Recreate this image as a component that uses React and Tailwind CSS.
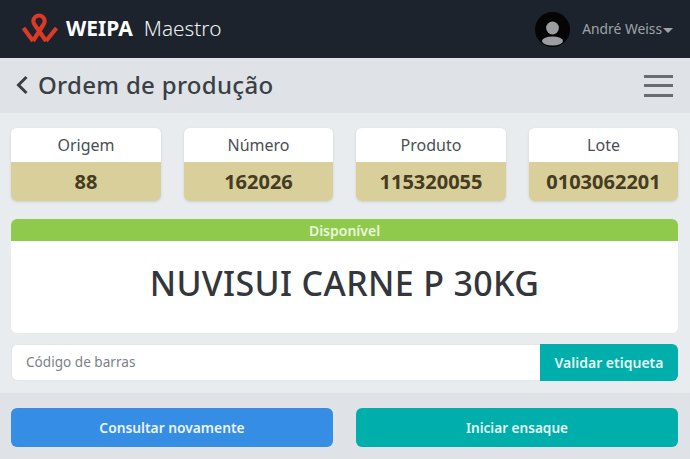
import React from "react";

const Logo = () => (
  <svg width="36" height="32" viewBox="0 0 36 32" fill="none" stroke="#dc3a26" strokeWidth="4.2" strokeLinejoin="round">
    <path d="M11 28L21.5 11.5A5.6 5.6 0 1 0 12.5 11.5L24 28" />
    <path d="M1.5 15L11 28M34.5 15L24 28" />
  </svg>
);

const InfoCard = ({ label, value, width }) => (
  <div className={`${width} rounded-md overflow-hidden shadow-sm`}>
    <div className="h-[34px] bg-white flex items-center justify-center text-[16px] text-[#4a4f55]">{label}</div>
    <div className="h-[39px] bg-[#d8cf9a] flex items-center justify-center text-[20px] font-bold text-[#453c22]">{value}</div>
  </div>
);

const App = () => {
  return (
    <div className="w-[690px] h-[459px] overflow-hidden flex flex-col bg-[#e9ecef] font-['Noto_Sans','Open_Sans',sans-serif]">
      {/* Header */}
      <div className="h-[58px] bg-[#1c232d] flex items-center justify-between pl-[22px] pr-[17px]">
        <div className="flex items-center">
          <Logo />
          <span className="ml-[8px] text-[21px] font-bold text-white">WEIPA</span>
          <span className="ml-[11px] text-[20.8px] font-light text-[#eef0f2]">Maestro</span>
        </div>
        <div className="flex items-center">
          <svg width="35" height="35" viewBox="0 0 35 35">
            <circle cx="17.5" cy="17.5" r="17.5" fill="#050505" />
            <circle cx="17.5" cy="16" r="6.4" fill="#9b9da0" />
            <ellipse cx="17.5" cy="29" rx="10.5" ry="4.5" fill="#9b9da0" />
          </svg>
          <span className="ml-[12px] text-[13.8px] text-[#9ea3a8]">André Weiss</span>
          <span className="ml-[1px] mt-[2px] w-0 h-0 border-x-[5px] border-x-transparent border-t-[5px] border-t-[#9ea3a8]" />
        </div>
      </div>

      {/* Title bar */}
      <div className="h-[55px] bg-[#dfe3e8] flex items-center justify-between pl-[16px] pr-[17px]">
        <div className="flex items-center pb-[2px]">
          <svg width="12" height="20" viewBox="0 0 12 20" fill="none" stroke="#3a3f45" strokeWidth="3">
            <path d="M10.5 2L2.5 10l8 8" />
          </svg>
          <h1 className="ml-[10px] text-[24px] font-medium tracking-[0.3px] text-[#3a3f45]">Ordem de produção</h1>
        </div>
        <div className="flex flex-col gap-[6.5px]">
          <div className="w-[29px] h-[3px] bg-[#6a6d70]" />
          <div className="w-[29px] h-[3px] bg-[#6a6d70]" />
          <div className="w-[29px] h-[3px] bg-[#6a6d70]" />
        </div>
      </div>

      {/* Content */}
      <div className="flex-1 pl-[11px] pr-[12px] pt-[15px]">
        <div className="flex gap-[23px]">
          <InfoCard width="w-[150px]" label="Origem" value="88" />
          <InfoCard width="w-[149px]" label="Número" value="162026" />
          <InfoCard width="w-[150px]" label="Produto" value="115320055" />
          <InfoCard width="w-[149px]" label="Lote" value="0103062201" />
        </div>

        <div className="mt-[18px] rounded-md overflow-hidden bg-white">
          <div className="h-[22px] bg-[#8fca4d] flex items-center justify-center text-[14px] font-semibold text-[#eaf5dc]">Disponível</div>
          <div className="h-[92px] flex items-center justify-center pb-[8px] text-[34px] font-medium tracking-[0.35px] text-[#33373c]">NUVISUI CARNE P 30KG</div>
        </div>

        <div className="mt-[11px] h-[37px] flex">
          <div className="flex-1 bg-white rounded-l-md border border-r-0 border-[#e2e5e9] flex items-center pl-[14px] text-[13.6px] text-[#7c8186]">Código de barras</div>
          <button className="w-[138px] bg-[#00aeab] rounded-r-md text-[14px] font-semibold text-[#e6f7f6]">Validar etiqueta</button>
        </div>
      </div>

      {/* Footer */}
      <div className="h-[66px] bg-[#dfe3e8] pl-[11px] pr-[12px] pt-[15px] flex justify-between">
        <button className="w-[322px] h-[39px] pt-[1px] bg-[#368de4] rounded-md text-[13.8px] font-semibold text-[#eaf3fc]">Consultar novamente</button>
        <button className="w-[322px] h-[39px] pt-[1px] bg-[#00aeab] rounded-md text-[13.6px] font-semibold text-[#e6f7f6]">Iniciar ensaque</button>
      </div>
    </div>
  );
};

export default App;
